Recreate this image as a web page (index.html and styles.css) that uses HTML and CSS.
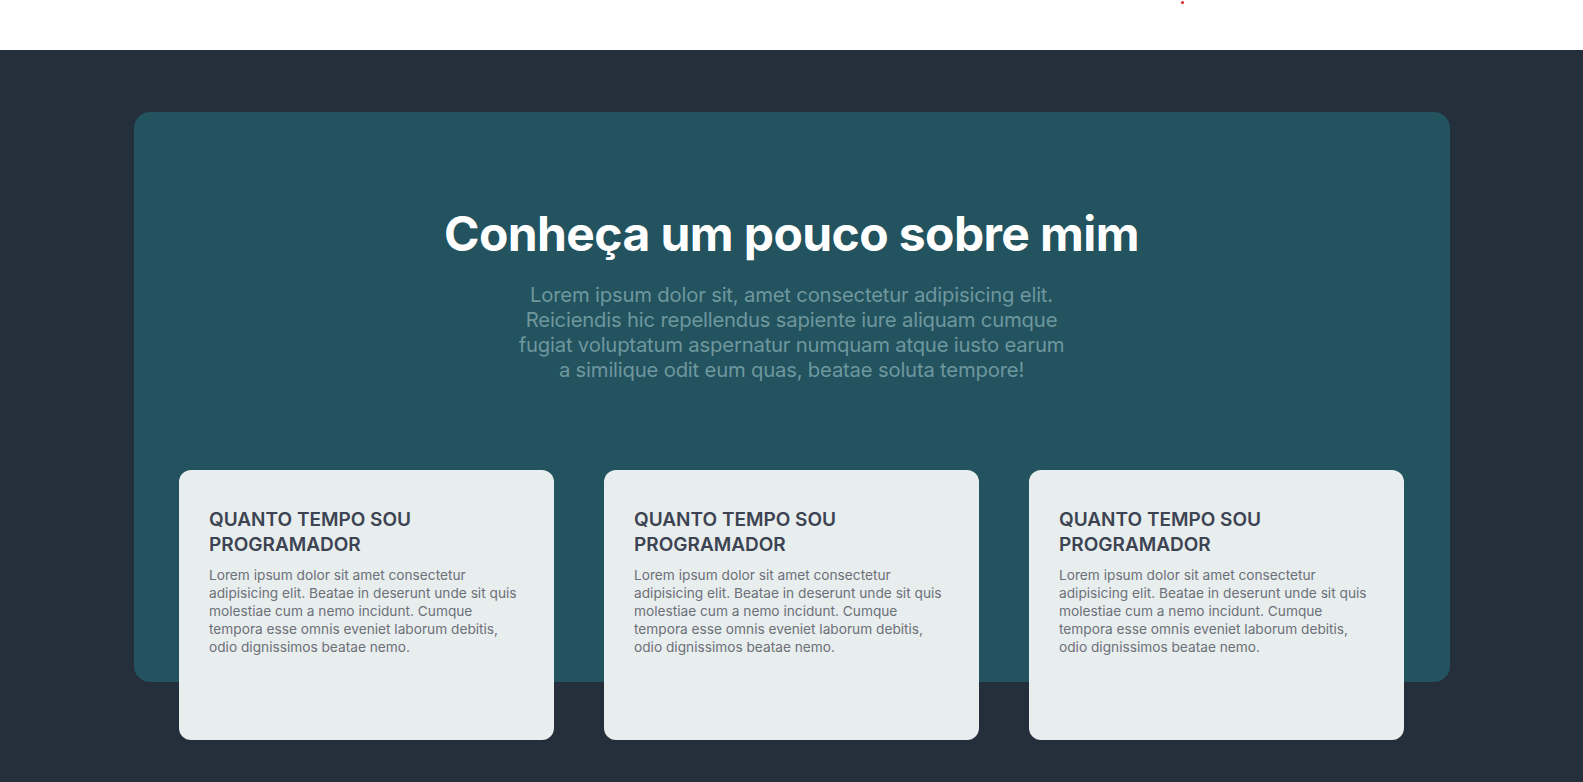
FILE: index.html
```html
<!DOCTYPE html>
<html lang="pt-BR">
<head>
<meta charset="utf-8">
<title>Sobre mim</title>
<link rel="stylesheet" href="styles.css">
</head>
<body>
<header class="topbar">
  <span class="dot"></span>
</header>
<main class="page">
  <section class="about">
    <div class="intro">
      <h1 class="intro-title">Conheça um pouco sobre mim</h1>
      <p class="intro-text">Lorem ipsum dolor sit, amet consectetur adipisicing elit. Reiciendis hic repellendus sapiente iure aliquam cumque fugiat voluptatum aspernatur numquam atque iusto earum a similique odit eum quas, beatae soluta tempore!</p>
    </div>
    <div class="cards">
      <article class="card">
        <h2 class="card-title">QUANTO TEMPO SOU PROGRAMADOR</h2>
        <p class="card-text">Lorem ipsum dolor sit amet consectetur adipisicing elit. Beatae in deserunt unde sit quis molestiae cum a nemo incidunt. Cumque tempora esse omnis eveniet laborum debitis, odio dignissimos beatae nemo.</p>
      </article>
      <article class="card">
        <h2 class="card-title">QUANTO TEMPO SOU PROGRAMADOR</h2>
        <p class="card-text">Lorem ipsum dolor sit amet consectetur adipisicing elit. Beatae in deserunt unde sit quis molestiae cum a nemo incidunt. Cumque tempora esse omnis eveniet laborum debitis, odio dignissimos beatae nemo.</p>
      </article>
      <article class="card">
        <h2 class="card-title">QUANTO TEMPO SOU PROGRAMADOR</h2>
        <p class="card-text">Lorem ipsum dolor sit amet consectetur adipisicing elit. Beatae in deserunt unde sit quis molestiae cum a nemo incidunt. Cumque tempora esse omnis eveniet laborum debitis, odio dignissimos beatae nemo.</p>
      </article>
    </div>
  </section>
</main>
</body>
</html>
```

FILE: styles.css
```css
* {
  box-sizing: border-box;
}

html, body {
  margin: 0;
  padding: 0;
}

body {
  font-family: "Inter", "Noto Sans", sans-serif;
  background: #252f3c;
  min-height: 782px;
}

.topbar {
  position: relative;
  height: 50px;
  background: #ffffff;
}

.dot {
  position: absolute;
  left: 1181px;
  top: 1px;
  width: 3px;
  height: 3px;
  border-radius: 50%;
  background: #e0202a;
}

.page {
  padding: 62px 133px 0 134px;
}

.about {
  background: #22535e;
  border-radius: 16px;
  height: 570px;
  padding: 0 46px 0 45px;
  display: flex;
  flex-direction: column;
}

.intro {
  display: flex;
  flex-direction: column;
  align-items: center;
  padding-top: 93px;
}

.intro-title {
  margin: 0;
  color: #ffffff;
  font-size: 48px;
  line-height: 58px;
  font-weight: 700;
  letter-spacing: -0.6px;
}

.intro-text {
  margin: 19px 0 0;
  width: 556px;
  text-align: center;
  color: #6f979e;
  font-size: 20.3px;
  line-height: 25px;
  letter-spacing: -0.2px;
}

.cards {
  margin-top: 88px;
  display: grid;
  grid-template-columns: repeat(3, 1fr);
  gap: 50px;
}

.card {
  background: #e8eded;
  border-radius: 12px;
  height: 270px;
  padding: 37px 30px 30px;
}

.card-title {
  margin: 0;
  color: #3c4352;
  font-size: 19px;
  line-height: 25px;
  font-weight: 600;
  letter-spacing: 0;
}

.card-text {
  margin: 9px 0 0;
  color: #6c7079;
  font-size: 13.7px;
  line-height: 18px;
  letter-spacing: 0;
}
```
